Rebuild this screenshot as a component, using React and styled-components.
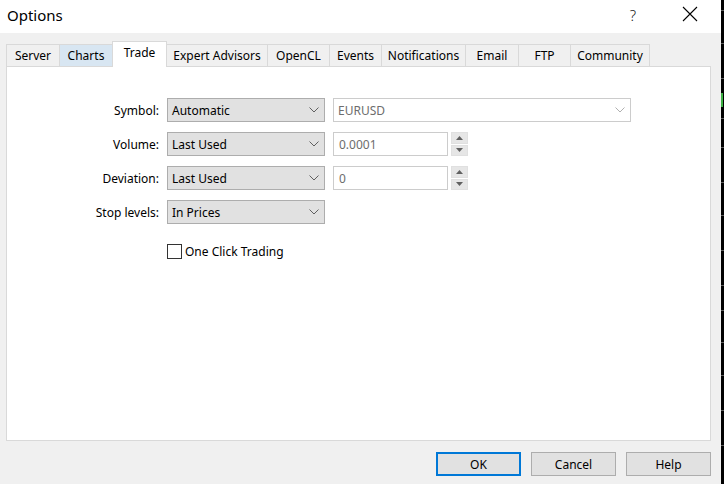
import React from "react";
import styled, { createGlobalStyle } from "styled-components";

const GlobalStyle = createGlobalStyle`
  html, body {
    margin: 0;
    padding: 0;
    background: #000;
  }
  body {
    font-family: "Noto Sans", "Open Sans", sans-serif;
    font-size: 12px;
    color: #000;
  }
`;

const Screen = styled.div`
  display: flex;
  width: 724px;
  height: 484px;
  overflow: hidden;
`;

const Dialog = styled.div`
  width: 721px;
  display: flex;
  flex-direction: column;
  background: #f0f0f0;
`;

const TitleBar = styled.div`
  height: 33px;
  background: #fff;
  display: flex;
  align-items: center;
  padding-left: 7px;
`;

const Title = styled.div`
  flex: 1;
  font-size: 15px;
  margin-top: -3px;
`;

const HelpMark = styled.div`
  width: 20px;
  font-size: 15px;
  font-weight: 300;
  color: #222;
  text-align: center;
  margin-right: 39px;
  margin-top: -3px;
`;

const CloseButton = styled.div`
  width: 16px;
  height: 16px;
  margin-right: 23px;
  margin-top: -6px;
  display: flex;
`;

const Body = styled.div`
  flex: 1;
  display: flex;
  flex-direction: column;
  padding: 8px 10px 8px 6px;
`;

const TabRow = styled.div`
  display: flex;
  align-items: flex-end;
  height: 26px;
  position: relative;
  z-index: 1;
`;

const Tab = styled.div`
  width: ${(p) => p.$w}px;
  height: ${(p) => (p.$active ? 26 : 23)}px;
  box-sizing: border-box;
  border: 1px solid #d9d9d9;
  border-left-width: ${(p) => (p.$first || p.$active ? 1 : 0)}px;
  border-bottom: ${(p) => (p.$active ? "none" : "1px solid #d9d9d9")};
  background: ${(p) => (p.$active ? "#fff" : p.$hover ? "#d8e6f2" : "#f0f0f0")};
  display: flex;
  align-items: center;
  justify-content: center;
  padding-bottom: ${(p) => (p.$active ? 4 : 1)}px;
  white-space: nowrap;
  margin-left: ${(p) => (p.$active ? -1 : 0)}px;
`;

const Panel = styled.div`
  height: 375px;
  box-sizing: border-box;
  background: #fff;
  border: 1px solid #d9d9d9;
  margin-top: -1px;
  padding-top: 31px;
`;

const Form = styled.div`
  display: grid;
  grid-template-columns: 152px 158px 298px;
  column-gap: 8px;
  row-gap: 10px;
  grid-auto-rows: 24px;
  align-items: center;
`;

const Label = styled.div`
  text-align: right;
`;

const Select = styled.div`
  height: 24px;
  box-sizing: border-box;
  border: 1px solid #adadad;
  background: ${(p) => (p.$disabled ? "#fff" : "#e1e1e1")};
  border-color: ${(p) => (p.$disabled ? "#cccccc" : "#adadad")};
  color: ${(p) => (p.$disabled ? "#6d6d6d" : "#000")};
  display: flex;
  align-items: center;
  padding: 0 5px 0 4px;
`;

const SelectText = styled.span`
  flex: 1;
`;

const SpinGroup = styled.div`
  display: flex;
  align-items: center;
  gap: 3px;
`;

const NumberInput = styled.div`
  width: 115px;
  height: 24px;
  box-sizing: border-box;
  border: 1px solid #cccccc;
  color: #6d6d6d;
  display: flex;
  align-items: center;
  padding-left: 5px;
`;

const Spinner = styled.div`
  width: 17px;
  height: 24px;
  display: flex;
  flex-direction: column;
  gap: 1px;
`;

const SpinButton = styled.div`
  flex: 1;
  background: #e6e6e6;
  border: 1px solid #e0e0e0;
  display: flex;
  align-items: center;
  justify-content: center;
`;

const CheckRow = styled.label`
  grid-column: 2 / 4;
  display: flex;
  align-items: center;
  gap: 3px;
  margin-top: 10px;
`;

const CheckBox = styled.span`
  width: 15px;
  height: 15px;
  box-sizing: border-box;
  border: 1px solid #333;
  background: #fff;
`;

const Footer = styled.div`
  display: flex;
  justify-content: flex-end;
  gap: 10px;
  padding-top: 11px;
`;

const Button = styled.div`
  width: 85px;
  height: 24px;
  box-sizing: border-box;
  background: #e1e1e1;
  border: ${(p) => (p.$default ? "2px solid #0078d7" : "1px solid #adadad")};
  display: flex;
  align-items: center;
  justify-content: center;
`;

const Strip = styled.div`
  width: 3px;
  height: 484px;
  background: #000;
`;

const Chevron = ({ color = "#606060" }) => (
  <svg width="10" height="6" viewBox="0 0 10 6">
    <path d="M0.5 0.5 L5 5 L9.5 0.5" fill="none" stroke={color} strokeWidth="1" />
  </svg>
);

const Arrow = ({ down }) => (
  <svg width="7" height="4" viewBox="0 0 7 4">
    <path d={down ? "M0 0 H7 L3.5 4 Z" : "M0 4 H7 L3.5 0 Z"} fill="#606060" />
  </svg>
);

const tabs = [
  ["Server", 54],
  ["Charts", 53],
  ["Trade", 55],
  ["Expert Advisors", 101],
  ["OpenCL", 62],
  ["Events", 52],
  ["Notifications", 84],
  ["Email", 53],
  ["FTP", 52],
  ["Community", 79],
];

const ticks = [10, 43, 78, 118, 147, 182, 215, 250, 285, 310, 342, 375, 410, 445];

function Spin({ value }) {
  return (
    <SpinGroup>
      <NumberInput>{value}</NumberInput>
      <Spinner>
        <SpinButton>
          <Arrow />
        </SpinButton>
        <SpinButton>
          <Arrow down />
        </SpinButton>
      </Spinner>
    </SpinGroup>
  );
}

export default function App() {
  return (
    <>
      <GlobalStyle />
      <Screen>
        <Dialog>
          <TitleBar>
            <Title>Options</Title>
            <HelpMark>?</HelpMark>
            <CloseButton>
              <svg width="16" height="16" viewBox="0 0 16 16">
                <path d="M1 1 L15 15 M15 1 L1 15" stroke="#000" strokeWidth="1.1" />
              </svg>
            </CloseButton>
          </TitleBar>
          <Body>
            <TabRow>
              {tabs.map(([name, w], i) => (
                <Tab
                  key={name}
                  $w={w}
                  $first={i === 0}
                  $active={name === "Trade"}
                  $hover={name === "Charts"}
                >
                  {name}
                </Tab>
              ))}
            </TabRow>
            <Panel>
              <Form>
                <Label>Symbol:</Label>
                <Select>
                  <SelectText>Automatic</SelectText>
                  <Chevron />
                </Select>
                <Select $disabled>
                  <SelectText>EURUSD</SelectText>
                  <Chevron color="#b0b0b0" />
                </Select>

                <Label>Volume:</Label>
                <Select>
                  <SelectText>Last Used</SelectText>
                  <Chevron />
                </Select>
                <Spin value="0.0001" />

                <Label>Deviation:</Label>
                <Select>
                  <SelectText>Last Used</SelectText>
                  <Chevron />
                </Select>
                <Spin value="0" />

                <Label>Stop levels:</Label>
                <Select>
                  <SelectText>In Prices</SelectText>
                  <Chevron />
                </Select>
                <div />

                <div />
                <CheckRow>
                  <CheckBox />
                  One Click Trading
                </CheckRow>
              </Form>
            </Panel>
            <Footer>
              <Button $default>OK</Button>
              <Button>Cancel</Button>
              <Button>Help</Button>
            </Footer>
          </Body>
        </Dialog>
        <Strip>
          <svg width="3" height="484" viewBox="0 0 3 484">
            {ticks.map((y) => (
              <rect key={y} x="0" y={y} width="3" height="1" fill="#5a5a5a" />
            ))}
            <rect x="0" y="93" width="2" height="14" fill="#3cb043" />
          </svg>
        </Strip>
      </Screen>
    </>
  );
}
